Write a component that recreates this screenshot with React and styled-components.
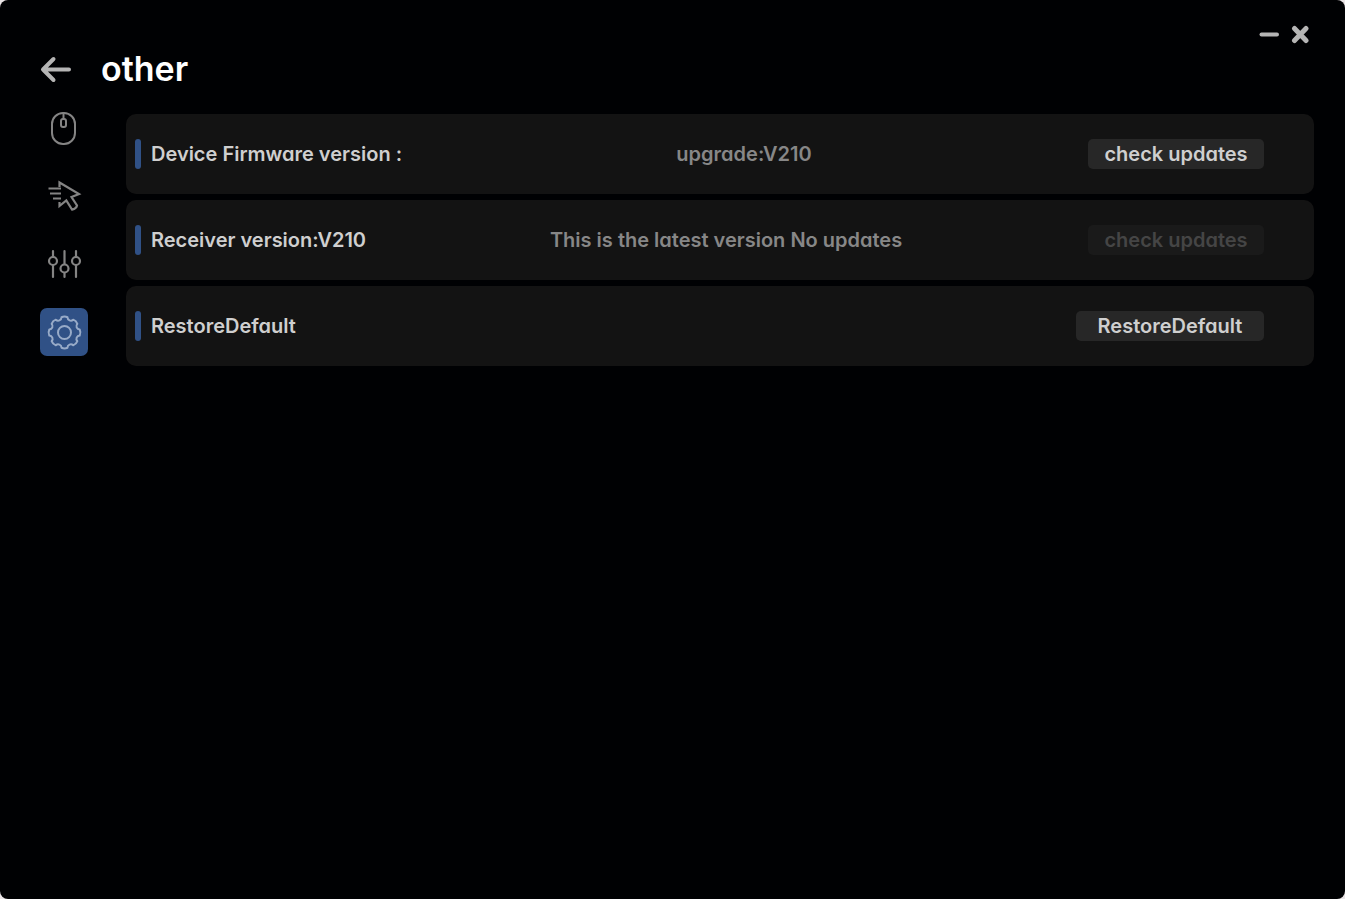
import React from "react";
import styled, { createGlobalStyle, css } from "styled-components";

const GlobalStyle = createGlobalStyle`
  *, *::before, *::after { box-sizing: border-box; }
  body {
    margin: 0;
    background: #e9e4e6;
    font-family: Inter, "Noto Sans", sans-serif;
    font-feature-settings: "cv11" 1;
  }
  button { font: inherit; font-feature-settings: inherit; border: 0; padding: 0; cursor: pointer; }
`;

const Window = styled.div`
  min-height: 100vh;
  display: flex;
  flex-direction: column;
  padding: 24px 31px 24px 40px;
  border-radius: 8px;
  background: #000103;
  color: #cfcfcf;
`;

const TitleBar = styled.div`
  display: flex;
  justify-content: flex-end;
  gap: 11px;
  height: 20px;
  padding-right: 4px;
`;

const IconButton = styled.button`
  display: flex;
  align-items: center;
  justify-content: center;
  background: none;
  color: #b5b5b5;
`;

const Header = styled.header`
  display: flex;
  align-items: center;
  gap: 29px;
  height: 50px;
`;

const Title = styled.h1`
  margin: 0;
  color: #fff;
  font-size: 34px;
  line-height: 50px;
  font-weight: 600;
`;

const Body = styled.div`
  display: flex;
  align-items: flex-start;
  gap: 38px;
  padding-top: 10px;
`;

const SideNav = styled.nav`
  display: flex;
  flex-direction: column;
  gap: 20px;
`;

const NavButton = styled.button`
  display: flex;
  align-items: center;
  justify-content: center;
  width: 48px;
  height: 48px;
  border-radius: 7px;
  background: ${(p) => (p.$active ? "#305186" : "transparent")};
  color: ${(p) => (p.$active ? "#98abc8" : "#848484")};
`;

const Panel = styled.main`
  flex: 1;
  display: flex;
  flex-direction: column;
  gap: 6px;
  padding-top: 10px;
`;

const Row = styled.section`
  display: flex;
  align-items: center;
  height: 80px;
  padding: 0 50px 0 9px;
  border-radius: 10px;
  background: #131313;
  font-size: 20px;
  line-height: 30px;
  font-weight: 600;
`;

const Label = styled.div`
  display: flex;
  gap: 10px;
  white-space: pre;

  &::before {
    content: "";
    width: 6px;
    height: 30px;
    border-radius: 3px;
    background: #305186;
  }
`;

const Status = styled.div`
  flex: 1;
  padding-right: 2px;
  text-align: center;
  color: #878787;
`;

const ActionButton = styled.button`
  width: ${(p) => (p.$wide ? 188 : 176)}px;
  height: 30px;
  border-radius: 5px;
  background: #272727;
  color: #cfcfcf;
  ${(p) =>
    p.disabled &&
    css`
      background: #1a1a1a;
      color: #454545;
      cursor: default;
    `}
`;

const Svg = ({ w, h, sw = 2, children }) => (
  <svg
    width={w}
    height={h}
    viewBox={`0 0 ${w} ${h}`}
    fill="none"
    stroke="currentColor"
    strokeWidth={sw}
    strokeLinecap="round"
    strokeLinejoin="round"
    aria-hidden="true"
  >
    {children}
  </svg>
);

const MouseIcon = () => (
  <Svg w={48} h={48}>
    <rect x="12" y="9" width="23" height="31" rx="11" />
    <path d="M23.5 9v6" />
    <rect x="21" y="15" width="5" height="8" rx="2" />
  </Svg>
);

const PointerIcon = () => (
  <Svg w={48} h={48} sw={2.2}>
    <path
      d="M19.5 15V10.5L39 22L31.5 25L37 33.5Q36.5 36.5 32 37.6L26.3 28.5L19.5 34V30"
      strokeLinejoin="miter"
      strokeLinecap="butt"
    />
    <path d="M8.5 16.5H21M10 21.5h11M13 26.5h8" strokeLinecap="butt" />
  </Svg>
);

const SlidersIcon = () => (
  <Svg w={48} h={48} sw={2.2}>
    <path d="M13 11v6M13 25v12M24.5 11v13M24.5 33v4M36 11v6M36 25v12" />
    <circle cx="13" cy="21" r="4" />
    <circle cx="24.5" cy="28.5" r="4" />
    <circle cx="36" cy="21" r="4" />
  </Svg>
);

const polar = (r, deg) => {
  const a = (deg * Math.PI) / 180;
  return `${(24.5 + r * Math.sin(a)).toFixed(2)} ${(24.5 - r * Math.cos(a)).toFixed(2)}`;
};

const gearPath =
  `M${polar(15.5, -11)}` +
  Array.from({ length: 8 }, (_, i) => {
    const a = i * 45;
    return `Q${polar(16.6, a)} ${polar(15.5, a + 11)}C${polar(12.6, a + 14)} ${polar(12.6, a + 31)} ${polar(15.5, a + 34)}`;
  }).join("") +
  "Z";

const GearIcon = () => (
  <Svg w={48} h={48}>
    <path d={gearPath} />
    <circle cx="24.5" cy="24.5" r="6.5" />
  </Svg>
);

const navItems = [
  { name: "Mouse", Icon: MouseIcon },
  { name: "Pointer", Icon: PointerIcon },
  { name: "Settings", Icon: SlidersIcon },
  { name: "Other", Icon: GearIcon, active: true },
];

const rows = [
  { label: "Device Firmware version :", status: "upgrade:V210", action: "check updates" },
  {
    label: "Receiver version:V210",
    status: "This is the latest version No updates",
    action: "check updates",
    disabled: true,
  },
  { label: "RestoreDefault", status: "", action: "RestoreDefault", wide: true },
];

export default function App() {
  return (
    <>
      <GlobalStyle />
      <Window>
        <TitleBar>
          <IconButton aria-label="Minimize">
            <Svg w={20} h={20} sw={4}>
              <path d="M2.5 10.5H18" />
            </Svg>
          </IconButton>
          <IconButton aria-label="Close">
            <Svg w={20} h={20} sw={5}>
              <path d="M4.5 4.5L16 16.5M16 4.5L4.5 16.5" />
            </Svg>
          </IconButton>
        </TitleBar>
        <Header>
          <IconButton aria-label="Back">
            <Svg w={32} h={28} sw={4}>
              <path d="M13.5 4L3 14.5L13.5 25M3 14.5H29" />
            </Svg>
          </IconButton>
          <Title>other</Title>
        </Header>
        <Body>
          <SideNav>
            {navItems.map(({ name, Icon, active }) => (
              <NavButton key={name} aria-label={name} $active={active}>
                <Icon />
              </NavButton>
            ))}
          </SideNav>
          <Panel>
            {rows.map((row) => (
              <Row key={row.label}>
                <Label>{row.label}</Label>
                <Status>{row.status}</Status>
                <ActionButton disabled={row.disabled} $wide={row.wide}>
                  {row.action}
                </ActionButton>
              </Row>
            ))}
          </Panel>
        </Body>
      </Window>
    </>
  );
}
